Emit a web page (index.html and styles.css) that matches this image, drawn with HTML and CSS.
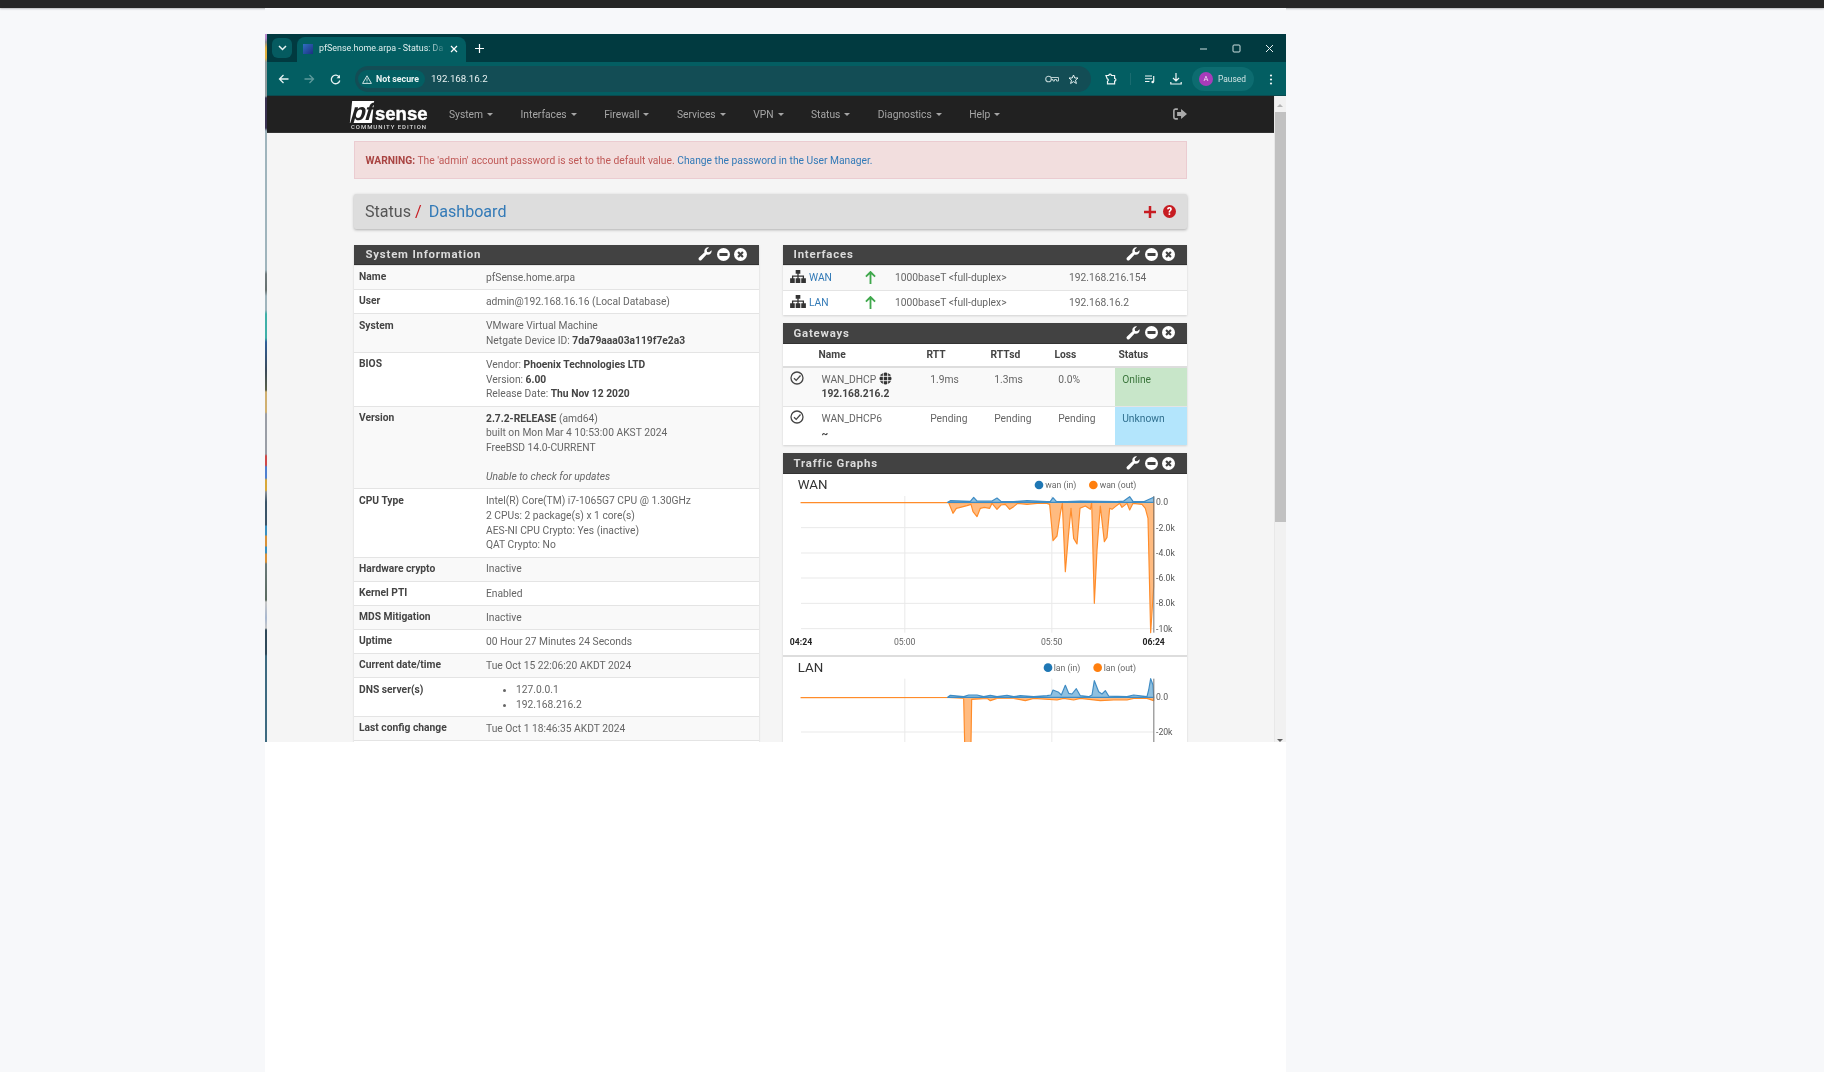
FILE: index.html

```html
<!DOCTYPE html>
<html>
<head>
    <meta charset="UTF-8">
    <title>pfSense.home.arpa - Status: Dashboard</title>
    <link rel="stylesheet" href="styles.css">
</head>
<body>
    <svg width="0" height="0" class="icon-defs">
        <symbol id="i-wrench" viewBox="0 0 16 16"><path d="M15.5 3.6c.3 1.4-.1 2.9-1.2 4-1.2 1.1-2.9 1.5-4.4.9L4 14.8c-.8.8-2 .8-2.8 0s-.8-2 0-2.8l6.300-5.900C6.900 4.600 7.300 2.900 8.500 1.700 9.600.6 11.100.2 12.500.5L9.900 3.200l.5 2.400 2.400.5z" fill="#fff"/></symbol>
        <symbol id="i-minus" viewBox="0 0 16 16"><circle cx="8" cy="8" r="8" fill="#fff"/><rect x="3" y="6.300" width="10" height="3.400" rx=".6" fill="#424242"/></symbol>
        <symbol id="i-close" viewBox="0 0 16 16"><circle cx="8" cy="8" r="8" fill="#fff"/><path d="M5 5l6 6M11 5l-6 6" stroke="#424242" stroke-width="2.600"/></symbol>
        <symbol id="i-net" viewBox="0 0 17 14"><path d="M6 0h5v4H9.200v2H15v3h2v5h-5V9h1.600V7.400H9.200V9H11v5H6V9h1.800V7.400H3.400V9H5v5H0V9h2V6h5.800V4H6z" fill="#333"/></symbol>
        <symbol id="i-up" viewBox="0 0 12 14"><path d="M6 1v13M1 6l5-5 5 5" fill="none" stroke="#3fa84c" stroke-width="2"/></symbol>
        <symbol id="i-check" viewBox="0 0 14 14"><circle cx="7" cy="7" r="6" fill="none" stroke="#444" stroke-width="1.300"/><path d="M4 7.200l2.200 2.200L10.500 4.500" fill="none" stroke="#444" stroke-width="1.300"/></symbol>
    </svg>

    <div class="top-strip"></div>

    <div class="sheet">
        <div class="window">
            <div class="desk-edge"></div>
            <div class="browser">

                <div class="titlebar">
                    <div class="tab-list">
                        <svg width="9" height="6" viewBox="0 0 9 6"><path d="M1 1l3.500 3.500L8 1" fill="none" stroke="#e6f2f2" stroke-width="1.500"/></svg>
                    </div>
                    <div class="tab">
                        <span class="favicon"></span>
                        <span class="tab-title">pfSense.home.arpa - Status: Da</span>
                        <svg width="8" height="8" viewBox="0 0 8 8"><path d="M1 1l6 6M7 1L1 7" stroke="#fff" stroke-width="1.200"/></svg>
                    </div>
                    <svg class="new-tab" width="9" height="9" viewBox="0 0 9 9"><path d="M4.500 0v9M0 4.500h9" stroke="#fff" stroke-width="1.200"/></svg>
                    <div class="window-btns">
                        <svg width="9" height="9" viewBox="0 0 9 9"><path d="M1 5h7" stroke="#cfe0e0"/></svg>
                        <svg width="9" height="9" viewBox="0 0 9 9"><rect x="1" y="1" width="7" height="7" rx="1" fill="none" stroke="#cfe0e0"/></svg>
                        <svg width="9" height="9" viewBox="0 0 9 9"><path d="M1 1l7 7M8 1L1 8" stroke="#e6f2f2"/></svg>
                    </div>
                </div>

                <div class="toolbar">
                    <div class="nav-btns">
                        <svg width="11" height="10" viewBox="0 0 11 10"><path d="M10.500 5H1.500M5.500 1l-4 4 4 4" fill="none" stroke="#e6f2f2" stroke-width="1.300"/></svg>
                        <svg width="11" height="10" viewBox="0 0 11 10"><path d="M.5 5h9M5.500 1l4 4-4 4" fill="none" stroke="#5f9a9c" stroke-width="1.300"/></svg>
                        <svg width="11" height="11" viewBox="0 0 11 11"><path d="M9.300 3.200A4.300 4.300 0 1 0 9.800 6.500" fill="none" stroke="#e6f2f2" stroke-width="1.300"/><path d="M10 .8v3.500H6.500z" fill="#e6f2f2"/></svg>
                    </div>
                    <div class="omnibox">
                        <div class="chip">
                            <svg width="10" height="9" viewBox="0 0 10 9"><path d="M5 .8L9.400 8.400H.6z" fill="none" stroke="#e6f2f2" stroke-width=".9"/><path d="M5 3.300v2.800M5 6.700v.8" stroke="#e6f2f2" stroke-width=".8"/></svg>
                            <span>Not secure</span>
                        </div>
                        <span class="url">192.168.16.2</span>
                        <div class="omni-icons">
                            <svg width="14" height="8" viewBox="0 0 14 8"><circle cx="3.500" cy="4" r="2.800" fill="none" stroke="#b9cfd0" stroke-width="1.100"/><path d="M6 2.500h7.500v3.500h-2V4.500H9.500V6H8V4.500H6" fill="none" stroke="#b9cfd0" stroke-width="1"/></svg>
                            <svg width="11" height="11" viewBox="0 0 11 11"><path d="M5.500 1l1.300 3h3.200L7.500 6.200l.9 3.300-2.900-1.900-2.900 1.900.9-3.300L1 4h3.200z" fill="none" stroke="#e6f2f2"/></svg>
                        </div>
                    </div>
                    <div class="tool-icons">
                        <svg width="12" height="12" viewBox="0 0 12 12"><path d="M1 2.500h2.800a1.300 1.300 0 0 1 2.600 0h3.200v3a1.300 1.300 0 0 1 0 2.600v2.700H2.500V8.300a1.300 1.300 0 0 0-.3-2.500z" fill="none" stroke="#f0f6f6" stroke-width="1.200"/></svg>
                        <span class="tool-sep"></span>
                        <svg width="11" height="9" viewBox="0 0 11 9"><path d="M0 1h7M0 3.800h7M0 6.500h4.500" stroke="#f0f6f6" stroke-width="1.100"/><path d="M8.700 1v5.800" stroke="#f0f6f6" stroke-width="1.200"/><circle cx="7.700" cy="7" r="1.300" fill="#f0f6f6"/></svg>
                        <svg width="12" height="12" viewBox="0 0 12 12"><path d="M6 0v7.500M3 5l3 3 3-3M.8 9v2h10.400V9" fill="none" stroke="#f0f6f6" stroke-width="1.200"/></svg>
                        <div class="profile">
                            <span class="avatar">A</span>
                            <span>Paused</span>
                        </div>
                        <svg width="4" height="11" viewBox="0 0 4 11"><circle cx="2" cy="1.500" r="1.100" fill="#f0f6f6"/><circle cx="2" cy="5.500" r="1.100" fill="#f0f6f6"/><circle cx="2" cy="9.500" r="1.100" fill="#f0f6f6"/></svg>
                    </div>
                </div>

                <div class="viewport">
                    <div class="page">
                        <div class="navbar">
                            <div class="logo">
                                <div class="logo-mark"><span class="logo-pf">pf</span><span class="logo-sense">sense</span></div>
                                <div class="logo-sub">COMMUNITY EDITION</div>
                            </div>
                            <ul class="menu">
                                <li>System</li>
                                <li>Interfaces</li>
                                <li>Firewall</li>
                                <li>Services</li>
                                <li>VPN</li>
                                <li>Status</li>
                                <li>Diagnostics</li>
                                <li>Help</li>
                            </ul>
                            <svg class="logout" width="14" height="12" viewBox="0 0 13 11"><path d="M4.500 1H2.200A1.500 1.500 0 0 0 .8 2.500v6A1.500 1.500 0 0 0 2.200 10h2.300" fill="none" stroke="#aaa" stroke-width="1.500"/><path d="M3.800 3.700h3.700V.9L13 5.500l-5.500 4.600V7.300H3.800z" fill="#aaa"/></svg>
                        </div>

                        <div class="container">
                            <div class="alert"><b>WARNING:</b> The 'admin' account password is set to the default value. <a>Change the password in the User Manager.</a></div>

                            <div class="crumbs">
                                <span class="crumb-text">Status <i>/</i></span>
                                <a class="crumb-link">Dashboard</a>
                                <svg class="crumb-plus" width="12" height="12" viewBox="0 0 12 12"><path d="M6 0v12M0 6h12" stroke="#c71c22" stroke-width="2.500"/></svg>
                                <span class="crumb-help">?</span>
                            </div>

                            <div class="columns">
                                <div class="col">
                                    <div class="panel">
                                        <div class="panel-head">
                                            <h2>System Information</h2>
                                            <span class="panel-icons"><svg class="ic-wrench"><use href="#i-wrench"/></svg><svg><use href="#i-minus"/></svg><svg><use href="#i-close"/></svg></span>
                                        </div>
                                        <div class="info">
                                            <div class="info-row"><span class="info-key">Name</span><span class="info-val">pfSense.home.arpa</span></div>
                                            <div class="info-row"><span class="info-key">User</span><span class="info-val">admin@192.168.16.16 (Local Database)</span></div>
                                            <div class="info-row"><span class="info-key">System</span><span class="info-val">VMware Virtual Machine<br>Netgate Device ID: <b>7da79aaa03a119f7e2a3</b></span></div>
                                            <div class="info-row"><span class="info-key">BIOS</span><span class="info-val">Vendor: <b>Phoenix Technologies LTD</b><br>Version: <b>6.00</b><br>Release Date: <b>Thu Nov 12 2020</b></span></div>
                                            <div class="info-row"><span class="info-key">Version</span><span class="info-val"><b>2.7.2-RELEASE</b> (amd64)<br>built on Mon Mar 4 10:53:00 AKST 2024<br>FreeBSD 14.0-CURRENT<br><br><em>Unable to check for updates</em></span></div>
                                            <div class="info-row"><span class="info-key">CPU Type</span><span class="info-val">Intel(R) Core(TM) i7-1065G7 CPU @ 1.30GHz<br>2 CPUs: 2 package(s) x 1 core(s)<br>AES-NI CPU Crypto: Yes (inactive)<br>QAT Crypto: No</span></div>
                                            <div class="info-row"><span class="info-key">Hardware crypto</span><span class="info-val">Inactive</span></div>
                                            <div class="info-row"><span class="info-key">Kernel PTI</span><span class="info-val">Enabled</span></div>
                                            <div class="info-row"><span class="info-key">MDS Mitigation</span><span class="info-val">Inactive</span></div>
                                            <div class="info-row"><span class="info-key">Uptime</span><span class="info-val">00 Hour 27 Minutes 24 Seconds</span></div>
                                            <div class="info-row"><span class="info-key">Current date/time</span><span class="info-val">Tue Oct 15 22:06:20 AKDT 2024</span></div>
                                            <div class="info-row"><span class="info-key">DNS server(s)</span><ul class="info-val dns"><li>127.0.0.1</li><li>192.168.216.2</li></ul></div>
                                            <div class="info-row"><span class="info-key">Last config change</span><span class="info-val">Tue Oct 1 18:46:35 AKDT 2024</span></div>
                                            <div class="info-row"><span class="info-key">&nbsp;</span></div>
                                        </div>
                                    </div>
                                </div>

                                <div class="col">
                                    <div class="panel">
                                        <div class="panel-head">
                                            <h2>Interfaces</h2>
                                            <span class="panel-icons"><svg class="ic-wrench"><use href="#i-wrench"/></svg><svg><use href="#i-minus"/></svg><svg><use href="#i-close"/></svg></span>
                                        </div>
                                        <div class="if-row">
                                            <span><svg class="ic-net"><use href="#i-net"/></svg><a>WAN</a></span>
                                            <svg class="ic-up"><use href="#i-up"/></svg>
                                            <span>1000baseT &lt;full-duplex&gt;</span>
                                            <span>192.168.216.154</span>
                                        </div>
                                        <div class="if-row">
                                            <span><svg class="ic-net"><use href="#i-net"/></svg><a>LAN</a></span>
                                            <svg class="ic-up"><use href="#i-up"/></svg>
                                            <span>1000baseT &lt;full-duplex&gt;</span>
                                            <span>192.168.16.2</span>
                                        </div>
                                    </div>

                                    <div class="panel">
                                        <div class="panel-head">
                                            <h2>Gateways</h2>
                                            <span class="panel-icons"><svg class="ic-wrench"><use href="#i-wrench"/></svg><svg><use href="#i-minus"/></svg><svg><use href="#i-close"/></svg></span>
                                        </div>
                                        <table class="gateways">
                                            <colgroup><col class="gw-c1"><col class="gw-c2"><col class="gw-c3"><col class="gw-c3"><col class="gw-c3"><col></colgroup>
                                            <thead>
                                                <tr><th></th><th>Name</th><th>RTT</th><th>RTTsd</th><th>Loss</th><th>Status</th></tr>
                                            </thead>
                                            <tbody>
                                                <tr class="gw-first">
                                                    <td class="gw-check"><svg class="ic-check"><use href="#i-check"/></svg></td>
                                                    <td class="gw-name">WAN_DHCP <svg class="ic-globe" viewBox="0 0 12 12"><circle cx="6" cy="6" r="5.500" fill="#333"/><path d="M0 4h12M0 8h12M4 0v12M8 0v12" stroke="#fff" stroke-width=".8"/></svg><br><b>192.168.216.2</b></td>
                                                    <td>1.9ms</td><td>1.3ms</td><td>0.0%</td>
                                                    <td class="st-online">Online</td>
                                                </tr>
                                                <tr>
                                                    <td class="gw-check"><svg class="ic-check"><use href="#i-check"/></svg></td>
                                                    <td class="gw-name">WAN_DHCP6<br><b>~</b></td>
                                                    <td>Pending</td><td>Pending</td><td>Pending</td>
                                                    <td class="st-unknown">Unknown</td>
                                                </tr>
                                            </tbody>
                                        </table>
                                    </div>

                                    <div class="panel">
                                        <div class="panel-head">
                                            <h2>Traffic Graphs</h2>
                                            <span class="panel-icons"><svg class="ic-wrench"><use href="#i-wrench"/></svg><svg><use href="#i-minus"/></svg><svg><use href="#i-close"/></svg></span>
                                        </div>
                                        <!-- chart units are 1/3 px -->
                                        <svg class="graph graph-wan" viewBox="8 72 1212 543">
                                            <g class="grid">
                                                <path d="M62 233H1120M62 309H1120M62 384H1120M62 460H1120M62 536H1120"/>
                                                <path d="M373.500 138V548M814.500 138V548"/>
                                            </g>
                                            <path class="area-out" d="M62 158L505 158 518 190 528 175 540 172 560 167 572 163 578 185 590 200 600 175 612 172 628 175 635 160 650 178 662 165 675 163 688 178 700 170 712 160 740 163 770 160 800 160 808 163 818 272 830 258 840 190 846 160 855 365 864 260 872 175 880 265 890 282 899 175 915 168 930 178 934 158 942 460 950 300 960 168 972 275 980 262 988 175 995 178 1005 170 1018 160 1025 172 1040 160 1048 180 1058 160 1085 163 1095 175 1103 205 1111 548 1120 410 1120 157Z"/>
                                            <path class="area-in" d="M502 157L510 152 570 154 580 142 590 153 635 153 650 144 662 154 700 155 740 152 800 155 810 154 818 143 828 154 860 155 900 153 1010 155 1030 153 1048 140 1058 154 1090 155 1120 142 1120 157Z"/>
                                            <path class="axis" d="M1120.500 138V548"/>
                                            <text class="g-title" x="52" y="116">WAN</text>
                                            <circle class="dot-in" cx="776" cy="105" r="13"/>
                                            <text class="g-legend" x="795" y="114">wan (in)</text>
                                            <circle class="dot-out" cx="939" cy="105" r="13"/>
                                            <text class="g-legend" x="958" y="114">wan (out)</text>
                                            <text class="g-tick" x="1127" y="166">0.0</text>
                                            <text class="g-tick" x="1127" y="242">-2.0k</text>
                                            <text class="g-tick" x="1127" y="318">-4.0k</text>
                                            <text class="g-tick" x="1127" y="393">-6.0k</text>
                                            <text class="g-tick" x="1127" y="469">-8.0k</text>
                                            <text class="g-tick" x="1127" y="545">-10k</text>
                                            <text class="g-time bold" x="62" y="584">04:24</text>
                                            <text class="g-time" x="373" y="584">05:00</text>
                                            <text class="g-time" x="814" y="584">05:50</text>
                                            <text class="g-time bold" x="1120" y="584">06:24</text>
                                        </svg>
                                        <svg class="graph graph-lan" viewBox="8 621 1212 255">
                                            <g class="grid">
                                                <path d="M62 846H1120"/>
                                                <path d="M373.500 686V876M814.500 686V876"/>
                                            </g>
                                            <path class="area-out" d="M62 743L505 743 550 745 553 880 572 880 574 748 620 745 630 752 650 745 700 745 735 752 760 745 830 750 850 745 880 750 900 745 960 752 1000 750 1040 750 1060 745 1100 745 1120 752 1120 742Z"/>
                                            <path class="area-in" d="M502 742L510 736 550 740 565 735 590 735 610 740 630 736 650 740 680 736 700 740 720 737 760 740 800 737 812 735 818 720 835 727 843 735 855 706 865 730 875 732 888 716 900 737 925 740 935 735 942 692 955 725 965 732 975 722 985 738 1040 740 1060 735 1100 740 1105 720 1111 686 1118 705 1120 742Z"/>
                                            <path class="axis" d="M1120.500 686V880"/>
                                            <text class="g-title" x="52" y="665">LAN</text>
                                            <circle class="dot-in" cx="803" cy="653" r="13"/>
                                            <text class="g-legend" x="820" y="662">lan (in)</text>
                                            <circle class="dot-out" cx="952" cy="653" r="13"/>
                                            <text class="g-legend" x="970" y="662">lan (out)</text>
                                            <text class="g-tick" x="1127" y="751">0.0</text>
                                            <text class="g-tick" x="1127" y="854">-20k</text>
                                        </svg>
                                    </div>
                                </div>
                            </div>
                        </div>
                    </div>
                    <div class="scrollbar">
                        <span class="sb-up"></span>
                        <span class="sb-thumb"></span>
                        <span class="sb-down"></span>
                    </div>
                </div>
            </div>
        </div>
    </div>
</body>
</html>
```

FILE: styles.css

```css
* {
    box-sizing: border-box;
}

body {
    margin: 0;
    background-color: #f7f8fa;
    font-family: Roboto, "Liberation Sans", sans-serif;
    font-size: 10.27px;
    line-height: 14.66px;
    color: #666;
    overflow: hidden;
    height: 1072px;
}

.icon-defs {
    display: block;
    height: 0;
}

.top-strip {
    height: 8px;
    background-color: #262626;
    box-shadow: 0 1px 2px rgba(0, 0, 0, .25);
}

.sheet {
    width: 1021px;
    height: 1064px;
    margin-left: 265px;
    padding-top: 26px;
    background-image: linear-gradient(#f7f8fa 0, #f7f8fa 26px, #fff 26px);
}

.window {
    display: flex;
    height: 708px;
    overflow: hidden;
    filter: blur(.45px);
}

/* whatever was behind the captured window */
.desk-edge {
    width: 2px;
    flex: none;
    background: linear-gradient(#b98ccf 0, #b98ccf 4px, #8a8a90 8px, #e0b040 14px, #e0b040 24px, #8f9a9c 28px, #8f9a9c 62px, #38304f 64px, #38304f 94px, #9fb4bc 97px, #9fb4bc 236px, #6f7a7c 240px, #66706f 256px, #9fb4bc 262px, #9fb4bc 276px, #3fb0a8 280px, #3fb0a8 304px, #2f5f9a 308px, #3a4a5a 336px, #5a6048 356px, #d0b070 358px, #d0b070 378px, #9a9ea6 380px, #9a9ea6 420px, #d04848 422px, #d04848 431px, #4f7fd0 433px, #4f7fd0 444px, #d8a838 446px, #d8a838 456px, #8a9098 458px, #3a5468 468px, #3a5468 491px, #3a90c0 492px, #3a90c0 501px, #d89038 502px, #d89038 512px, #3a90c0 513px, #3a90c0 519px, #d89038 520px, #d89038 528px, #6a7a7a 530px, #5a6a60 566px, #c8c8c8 568px, #a8b8d0 584px, #c8c8c8 594px, #2f4858 596px, #2f4858 620px, #3d6a80 622px, #3d6a80 708px);
}

.browser {
    flex: 1;
    min-width: 0;
    display: flex;
    flex-direction: column;
}

/* browser chrome */
.titlebar {
    height: 28px;
    flex: none;
    display: flex;
    align-items: flex-end;
    background-color: #013a40;
    color: #fff;
    padding-left: 5px;
}

.tab-list {
    width: 20px;
    height: 20px;
    margin-bottom: 4px;
    border-radius: 6px;
    background-color: #055b60;
    display: flex;
    align-items: center;
    justify-content: center;
}

.tab {
    width: 169px;
    height: 25px;
    margin-left: 5px;
    padding: 0 8px 2px 6px;
    border-radius: 8px 8px 0 0;
    background-color: #035e62;
    display: flex;
    align-items: center;
    gap: 6px;
    font-size: 8.900px;
}

.favicon {
    width: 10px;
    height: 10px;
    flex: none;
    background: linear-gradient(135deg, #2f6fc0, #1c2f80);
}

.tab-title {
    flex: 1;
    white-space: nowrap;
    color: #dfeeee;
    -webkit-mask-image: linear-gradient(to right, #000 88%, rgba(0, 0, 0, .15));
    mask-image: linear-gradient(to right, #000 88%, rgba(0, 0, 0, .15));
}

.new-tab {
    align-self: center;
    margin-left: 9px;
}

.window-btns {
    margin-left: auto;
    margin-right: 12px;
    align-self: center;
    display: flex;
    gap: 24px;
}

.toolbar {
    height: 34px;
    flex: none;
    display: flex;
    align-items: center;
    background-color: #035e62;
    padding: 1px 0 0 11px;
    color: #f0f6f6;
    border-bottom: 1px solid #0b4a4f;
}

.nav-btns {
    display: flex;
    align-items: center;
    gap: 15px;
    width: 77px;
}

.omnibox {
    width: 736px;
    height: 26px;
    border-radius: 13px;
    background-color: #134d55;
    display: flex;
    align-items: center;
    padding: 0 12px 0 3px;
}

.chip {
    height: 18px;
    width: 67px;
    border-radius: 9px;
    background-color: #035e62;
    display: flex;
    align-items: center;
    gap: 4px;
    padding-left: 4px;
    font-size: 8.800px;
    font-weight: 700;
    color: #eaf4f4;
}

.url {
    margin-left: 6px;
    font-size: 9.700px;
    color: #e8f2f2;
}

.omni-icons {
    margin-left: auto;
    display: flex;
    align-items: center;
    gap: 9px;
}

.tool-icons {
    flex: 1;
    display: flex;
    align-items: center;
    padding-left: 14px;
}

.tool-sep {
    width: 1px;
    height: 12px;
    margin: 0 14px 0 13px;
    background-color: #1a6c70;
}

.tool-icons > svg + svg {
    margin-left: 14px;
}

.profile {
    width: 62px;
    height: 24px;
    margin-left: 10px;
    margin-right: 15px;
    padding-left: 7px;
    border-radius: 12px;
    background-color: #0d6c70;
    display: flex;
    align-items: center;
    gap: 5px;
    font-size: 8.400px;
    color: #cfe3e3;
}

.avatar {
    width: 14px;
    height: 14px;
    border-radius: 50%;
    background-color: #a83cba;
    color: #f3dff6;
    font-size: 7.500px;
    line-height: 14px;
    text-align: center;
}

/* page inside the browser */
.viewport {
    flex: 1;
    min-height: 0;
    display: flex;
}

.page {
    flex: 1;
    min-width: 0;
    background-color: #f5f5f5;
    overflow: hidden;
}

.scrollbar {
    width: 12px;
    flex: none;
    background-color: #f1f1f1;
    display: flex;
    flex-direction: column;
    border-left: 1px solid #e8e8e8;
}

.sb-up,
.sb-down {
    height: 16px;
    flex: none;
    position: relative;
}

.sb-down {
    height: 13px;
}

.sb-up::after,
.sb-down::after {
    content: "";
    position: absolute;
    left: 2px;
    top: 8px;
    border-left: 3px solid transparent;
    border-right: 3px solid transparent;
}

.sb-down::after {
    top: 10px;
}

.sb-up::after {
    border-bottom: 3px solid #b5b5b5;
}

.sb-down::after {
    border-top: 3px solid #606060;
}

.sb-thumb {
    height: 410px;
    background-color: #c1c1c1;
    margin-bottom: auto;
}

.navbar {
    height: 37px;
    display: flex;
    align-items: center;
    background-color: #212121;
    padding-left: 84px;
    border-bottom: 1px solid #333;
}

.logo {
    width: 78px;
    padding-top: 4px;
    color: #fff;
}

.logo-mark {
    display: flex;
    align-items: center;
    height: 22px;
}

.logo-pf {
    width: 22px;
    height: 22px;
    background-color: #fff;
    color: #212121;
    font-family: "Liberation Sans", sans-serif;
    font-size: 24px;
    font-style: italic;
    font-weight: 700;
    line-height: 22px;
    text-align: center;
    letter-spacing: -1px;
    transform: skewX(-6deg);
}

.logo-sense {
    margin-left: 2px;
    padding-top: 3px;
    font-family: "Liberation Sans", sans-serif;
    font-size: 18.500px;
    font-weight: 700;
    line-height: 22px;
    -webkit-text-stroke: .4px #fff;
}

.logo-sub {
    font-size: 6px;
    line-height: 8px;
    margin-top: 0;
    font-weight: 500;
    letter-spacing: .95px;
    white-space: nowrap;
    color: #ddd;
}

.menu {
    list-style: none;
    display: flex;
    gap: 27.500px;
    margin: 2px 0 0 20px;
    padding: 0;
    color: #a6a6a6;
}

.menu li::after {
    content: "";
    display: inline-block;
    margin-left: 4px;
    vertical-align: 2px;
    border-top: 3px solid #a6a6a6;
    border-left: 3px solid transparent;
    border-right: 3px solid transparent;
}

.logout {
    margin-left: auto;
    margin-right: 87px;
    margin-top: -1px;
}

.container {
    width: 833px;
    margin-left: 87px;
    padding-top: 8px;
}

a {
    color: #337ab7;
}

.alert {
    height: 38px;
    padding: 11.500px 10.500px;
    background-color: #f2dede;
    border: 1px solid #ebccd1;
    color: #c05a58;
}

.alert b {
    color: #a94442;
}

.crumbs {
    height: 35px;
    margin-top: 15px;
    padding: 0 11px 0 11px;
    background-color: #ddd;
    border-radius: 2px;
    box-shadow: 0 1px 3px rgba(0, 0, 0, .3);
    display: flex;
    align-items: center;
    font-size: 16.100px;
}

.crumb-text {
    margin-top: 1px;
    color: #555;
    white-space: pre;
}

.crumb-text i {
    font-style: normal;
    color: #c71c22;
}

.crumb-link {
    margin: 1px 0 0 7px;
    color: #337ab7;
}

.crumb-plus {
    margin-left: auto;
}

.crumb-help {
    width: 13px;
    height: 13px;
    margin-left: 7px;
    border-radius: 50%;
    background-color: #c71c22;
    color: #fff;
    font-size: 10px;
    font-weight: 900;
    line-height: 13px;
    text-align: center;
}

.columns {
    display: flex;
    gap: 24px;
    margin-top: 15.500px;
    align-items: flex-start;
}

.col {
    flex: none;
    width: 405px;
}

.col + .col {
    width: 404px;
}

.panel {
    margin-bottom: 8.700px;
    background-color: #fff;
    box-shadow: 0 1px 2px rgba(0, 0, 0, .15);
}

.panel-head {
    height: 20.500px;
    padding: 0 12px 0 11.500px;
    display: flex;
    align-items: center;
    justify-content: space-between;
    background-color: #424242;
    border-bottom: 1px solid #333;
}

.col + .col .panel-head {
    padding-left: 10.500px;
}

.panel-head h2 {
    margin: 0;
    font-size: 11.400px;
    font-weight: 700;
    letter-spacing: .8px;
    color: #dcdcdc;
}

.panel-icons {
    display: flex;
    align-items: center;
    gap: 4.500px;
}

.panel-icons svg {
    width: 13px;
    height: 13px;
    display: block;
}

.panel-icons .ic-wrench {
    width: 14px;
    height: 14px;
}

b {
    color: #444;
}

.info-row {
    display: flex;
    padding: 4.250px 4px 4.250px 5px;
    border-top: 1px solid #e4e4e4;
}

.info-row:nth-child(odd),
.if-row:nth-child(2) {
    background-color: #f9f9f9;
}

.info-key {
    width: 127px;
    flex: none;
    font-weight: 700;
    color: #444;
}

.info-val {
    position: relative;
    top: .7px;
}

.dns {
    margin: 0;
    padding-left: 30px;
}

.if-row {
    display: grid;
    grid-template-columns: 81.500px 30.500px 174px 1fr;
    height: 24.750px;
    padding-top: 4.900px;
    border-top: 1px solid #e4e4e4;
    white-space: nowrap;
}

.if-row > span:first-child {
    padding-left: 7px;
}

.ic-net {
    width: 16px;
    height: 13px;
    vertical-align: -1px;
    margin: -3px 3px -1px 0;
}

.ic-up {
    width: 11px;
    height: 13px;
}

.gateways {
    width: 100%;
    border-collapse: collapse;
    table-layout: fixed;
}

.gw-c1 {
    width: 31.500px;
}

.gw-c2 {
    width: 108px;
}

.gw-c3 {
    width: 64px;
}

.gateways th {
    height: 23px;
    padding: 2px 0 0 4px;
    text-align: left;
    font-weight: 700;
    color: #444;
    border-bottom: 2px solid #ddd;
}

.gateways td {
    height: 38px;
    vertical-align: top;
    padding: 5px 0 0 7.700px;
    border-top: 1px solid #e4e4e4;
}

.gateways .gw-first td {
    height: 40px;
    border-top: 0;
}

.gw-first {
    background-color: #f9f9f9;
}

.gateways .gw-check {
    padding-left: 7px;
    padding-top: 3px;
}

.gateways .gw-name {
    padding-left: 7px;
}

.ic-check {
    width: 14px;
    height: 14px;
    display: block;
}

.ic-globe {
    width: 13px;
    height: 13px;
    vertical-align: -1px;
    margin: -3px 0 -1px;
}

.gateways .st-online {
    background-color: #c8e6c9;
    color: #3c763d;
}

.gateways .st-unknown {
    background-color: #b3e5fc;
    color: #31708f;
}

.graph {
    display: block;
    width: 404px;
    font-family: Roboto, "Liberation Sans", sans-serif;
    background-color: #fff;
}

.graph-wan {
    height: 181px;
}

.graph-lan {
    height: 85px;
    margin-top: 2px;
    box-shadow: 0 -2px 0 #ddd;
}

.grid path {
    fill: none;
    stroke: #e9e9e9;
    stroke-width: 3;
}

.area-out {
    fill: #ffbb80;
    stroke: #ff8c2a;
    stroke-width: 3.500;
    stroke-linejoin: round;
}

.area-in {
    fill: #8fc0e0;
    stroke: #3f8cc4;
    stroke-width: 3.500;
    stroke-linejoin: round;
}

.axis {
    fill: none;
    stroke: #777;
    stroke-width: 3;
}

.dot-in {
    fill: #1f77b4;
}

.dot-out {
    fill: #ff7f0e;
}

.g-title {
    font-size: 40px;
    fill: #333;
}

.g-legend {
    font-size: 26px;
    fill: #666;
}

.g-tick {
    font-size: 26px;
    fill: #555;
}

.g-time {
    font-size: 26px;
    fill: #666;
    text-anchor: middle;
}

.g-time.bold {
    font-weight: 700;
    fill: #222;
}
```
